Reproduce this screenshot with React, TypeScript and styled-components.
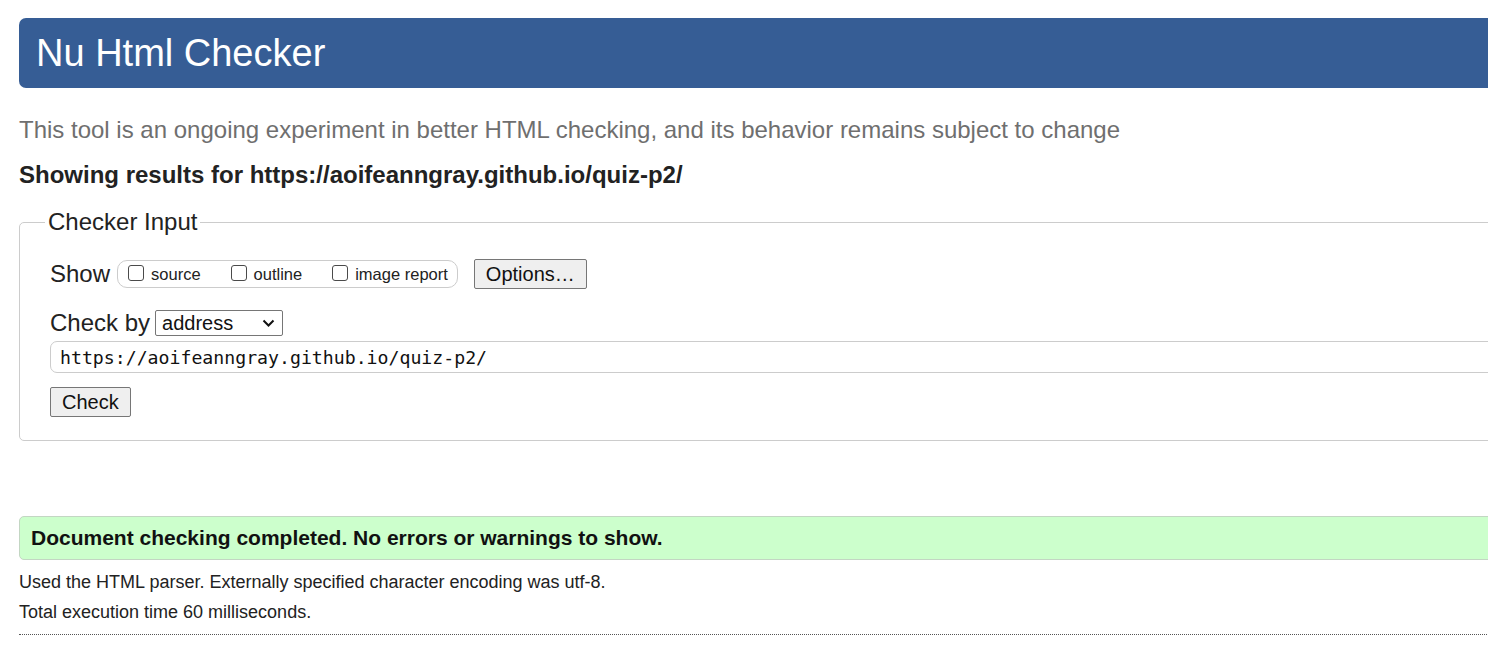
import React from "react";
import styled, { createGlobalStyle } from "styled-components";

const GlobalStyle = createGlobalStyle`
  html, body {
    margin: 0;
    padding: 0;
    background: #fff;
    overflow: hidden;
  }
  body {
    font-family: "Liberation Sans", Arial, sans-serif;
    color: #222;
  }
`;

const Page = styled.div`
  width: 1520px;
  padding: 18px 0 0 19px;
  display: flex;
  flex-direction: column;
`;

const Header = styled.header`
  height: 70px;
  background-color: #365d95;
  border-radius: 7px;
  display: flex;
  align-items: center;
  padding-left: 17px;
  color: #fff;
  font-size: 38px;
`;

const Intro = styled.p`
  margin: 28px 0 0;
  font-size: 24px;
  color: #6f6f6f;
  line-height: 28px;
`;

const Showing = styled.p`
  margin: 18px 0 0;
  font-size: 24px;
  font-weight: bold;
  line-height: 26px;
  color: #222;
`;

const Fieldset = styled.fieldset`
  margin: 20px 0 0;
  padding: 23px 0 23px 0;
  border: 1px solid #ccc;
  border-radius: 5px;
`;

const Legend = styled.legend`
  font-size: 24px;
  padding: 0 3px;
  margin-left: 25px;
  color: #222;
`;

const Body = styled.div`
  display: flex;
  flex-direction: column;
  padding-left: 30px;
`;

const Row = styled.div<{ $top: number; $gap: number }>`
  display: flex;
  align-items: center;
  gap: ${({ $gap }) => $gap}px;
  font-size: 24px;
  margin-top: ${({ $top }) => $top}px;
`;

const Group = styled.div`
  display: flex;
  align-items: center;
  height: 26px;
  border: 1px solid #ccc;
  border-radius: 10px;
  padding: 0 9px 0 10px;
  gap: 30px;
`;

const CheckLabel = styled.label`
  display: flex;
  align-items: center;
  gap: 7px;
  font-size: 16.5px;
  color: #222;
`;

const Box = styled.input.attrs({ type: "checkbox" })`
  appearance: none;
  -webkit-appearance: none;
  margin: 0 0 3px;
  width: 16px;
  height: 16px;
  box-sizing: border-box;
  border: 1px solid #4a4a4a;
  border-radius: 3px;
  background: #fff;
`;

const Button = styled.button<{ $left?: number }>`
  font-family: "Liberation Sans", Arial, sans-serif;
  font-size: 20px;
  color: #111;
  background: #efefef;
  border: 1px solid #767676;
  border-radius: 2px;
  padding: 0 11px;
  height: 30px;
  margin-left: ${({ $left }) => $left ?? 0}px;
`;

const SelectWrap = styled.div`
  position: relative;
  display: flex;
`;

const Select = styled.select`
  appearance: none;
  width: 128px;
  height: 26px;
  border: 1px solid #767676;
  border-radius: 2px;
  background: #fff;
  font-family: "Liberation Sans", Arial, sans-serif;
  font-size: 20px;
  color: #111;
  padding: 0 0 0 6px;
`;

const Chevron = styled.svg`
  position: absolute;
  right: 8px;
  top: 9px;
  pointer-events: none;
`;

const UrlInput = styled.input`
  margin-top: 4px;
  height: 32px;
  box-sizing: border-box;
  border: 1px solid #ccc;
  border-radius: 7px;
  padding: 0 9px;
  font-family: "DejaVu Sans Mono", "Liberation Mono", monospace;
  font-size: 18.2px;
  color: #111;
  width: 1460px;
`;

const CheckRow = styled.div`
  margin-top: 14px;
  display: flex;
`;

const Success = styled.div`
  margin-top: 75px;
  height: 44px;
  box-sizing: border-box;
  background: #ccffcc;
  border: 1px solid #c3d6c3;
  border-radius: 5px;
  display: flex;
  align-items: center;
  padding-left: 11px;
  font-weight: bold;
  font-size: 21px;
  color: #111;
`;

const Detail = styled.p<{ $top: number }>`
  margin: ${({ $top }) => $top}px 0 0;
  font-size: 18px;
  line-height: 20px;
  color: #222;
`;

const Rule = styled.hr`
  margin: 12px 0 0;
  border: 0;
  border-top: 1px dotted #555;
`;

export default function App() {
  return (
    <>
      <GlobalStyle />
      <Page>
        <Header>Nu Html Checker</Header>
        <Intro>
          This tool is an ongoing experiment in better HTML checking, and its behavior remains subject to change
        </Intro>
        <Showing>Showing results for https://aoifeanngray.github.io/quiz-p2/</Showing>
        <Fieldset>
          <Legend>Checker Input</Legend>
          <Body>
            <Row $top={0} $gap={7}>
              <span>Show</span>
              <Group>
                <CheckLabel>
                  <Box />
                  source
                </CheckLabel>
                <CheckLabel>
                  <Box />
                  outline
                </CheckLabel>
                <CheckLabel>
                  <Box />
                  image report
                </CheckLabel>
              </Group>
              <Button $left={9}>Options…</Button>
            </Row>
            <Row $top={20} $gap={5}>
              <span>Check by</span>
              <SelectWrap>
                <Select defaultValue="address">
                  <option value="address">address</option>
                  <option value="upload">file upload</option>
                  <option value="input">text input</option>
                </Select>
                <Chevron width="13" height="9" viewBox="0 0 13 9">
                  <path d="M1.5 1.5 L6.5 6.5 L11.5 1.5" fill="none" stroke="#111" strokeWidth="2" />
                </Chevron>
              </SelectWrap>
            </Row>
            <UrlInput defaultValue="https://aoifeanngray.github.io/quiz-p2/" />
            <CheckRow>
              <Button>Check</Button>
            </CheckRow>
          </Body>
        </Fieldset>
        <Success>Document checking completed. No errors or warnings to show.</Success>
        <Detail $top={12}>Used the HTML parser. Externally specified character encoding was utf-8.</Detail>
        <Detail $top={10}>Total execution time 60 milliseconds.</Detail>
        <Rule />
      </Page>
    </>
  );
}
